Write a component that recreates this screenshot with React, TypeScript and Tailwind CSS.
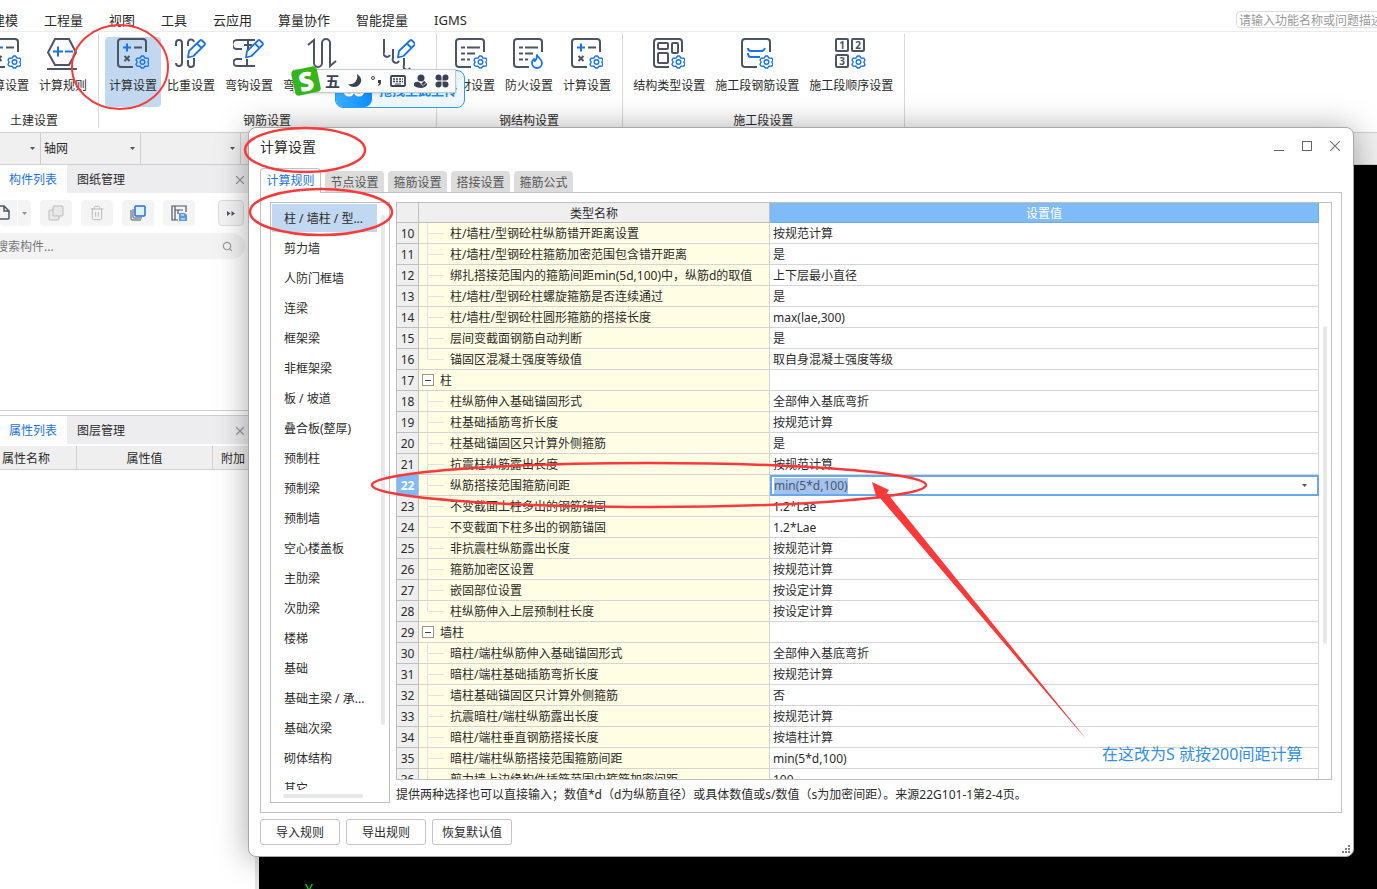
import type { ReactNode } from "react";
import { Check, Search, Trash2, X } from "lucide-react";
import clsx from "clsx";

const DARK = "#4d5466";
const BLUE = "#1a73e8";

const menus = ["建模", "工程量", "视图", "工具", "云应用", "算量协作", "智能提量", "IGMS"];

const categories = [
  "柱 / 墙柱 / 型...",
  "剪力墙",
  "人防门框墙",
  "连梁",
  "框架梁",
  "非框架梁",
  "板 / 坡道",
  "叠合板(整厚)",
  "预制柱",
  "预制梁",
  "预制墙",
  "空心楼盖板",
  "主肋梁",
  "次肋梁",
  "楼梯",
  "基础",
  "基础主梁 / 承...",
  "基础次梁",
  "砌体结构",
  "其它",
];

type Row = { id: number; name: string; value?: string; group?: boolean; last?: boolean };

const rows: Row[] = [
  { id: 10, name: "柱/墙柱/型钢砼柱纵筋错开距离设置", value: "按规范计算" },
  { id: 11, name: "柱/墙柱/型钢砼柱箍筋加密范围包含错开距离", value: "是" },
  { id: 12, name: "绑扎搭接范围内的箍筋间距min(5d,100)中，纵筋d的取值", value: "上下层最小直径" },
  { id: 13, name: "柱/墙柱/型钢砼柱螺旋箍筋是否连续通过", value: "是" },
  { id: 14, name: "柱/墙柱/型钢砼柱圆形箍筋的搭接长度", value: "max(lae,300)" },
  { id: 15, name: "层间变截面钢筋自动判断", value: "是" },
  { id: 16, name: "锚固区混凝土强度等级值", value: "取自身混凝土强度等级", last: true },
  { id: 17, name: "柱", group: true },
  { id: 18, name: "柱纵筋伸入基础锚固形式", value: "全部伸入基底弯折" },
  { id: 19, name: "柱基础插筋弯折长度", value: "按规范计算" },
  { id: 20, name: "柱基础锚固区只计算外侧箍筋", value: "是" },
  { id: 21, name: "抗震柱纵筋露出长度", value: "按规范计算" },
  { id: 22, name: "纵筋搭接范围箍筋间距", value: "min(5*d,100)" },
  { id: 23, name: "不变截面上柱多出的钢筋锚固", value: "1.2*Lae" },
  { id: 24, name: "不变截面下柱多出的钢筋锚固", value: "1.2*Lae" },
  { id: 25, name: "非抗震柱纵筋露出长度", value: "按规范计算" },
  { id: 26, name: "箍筋加密区设置", value: "按规范计算" },
  { id: 27, name: "嵌固部位设置", value: "按设定计算" },
  { id: 28, name: "柱纵筋伸入上层预制柱长度", value: "按设定计算", last: true },
  { id: 29, name: "墙柱", group: true },
  { id: 30, name: "暗柱/端柱纵筋伸入基础锚固形式", value: "全部伸入基底弯折" },
  { id: 31, name: "暗柱/端柱基础插筋弯折长度", value: "按规范计算" },
  { id: 32, name: "墙柱基础锚固区只计算外侧箍筋", value: "否" },
  { id: 33, name: "抗震暗柱/端柱纵筋露出长度", value: "按规范计算" },
  { id: 34, name: "暗柱/端柱垂直钢筋搭接长度", value: "按墙柱计算" },
  { id: 35, name: "暗柱/端柱纵筋搭接范围箍筋间距", value: "min(5*d,100)" },
  { id: 36, name: "剪力墙上边缘构件插筋范围内箍筋加密间距", value: "100" },
];

function Icon({ children }: { children: ReactNode }) {
  return (
    <svg width="32" height="32" fill="none" stroke={DARK} strokeWidth="2" className="shrink-0" aria-hidden="true">
      {children}
    </svg>
  );
}

function Gear({ x = 19, y = 17 }: { x?: number; y?: number }) {
  return (
    <g transform={`translate(${x} ${y})`} stroke={BLUE} strokeWidth="1.400" strokeLinejoin="round">
      <path d="M5.500 1h2l1.500 2 3 .3 1 1.700-1.200 2L13 9.500l-1 1.500-3 .2L7.500 13h-2L4 11.200 1 11 0 9.300 1.200 7 0 5l1-1.700L4 3Z" />
      <circle cx="6.500" cy="7" r="2.300" />
    </g>
  );
}

function Pencil({ x = 0 }: { x?: number }) {
  return (
    <g transform={`translate(${x} 0)`} stroke={BLUE} strokeWidth="1.800" strokeLinejoin="round">
      <path d="M14 13 25 2.500q1-1 2 0l2.500 2.500q1 1 0 2L18.500 18l-5.500 1.500ZM22 5.500l4.500 4.500" />
    </g>
  );
}

const frame = "M29 14V4a3 3 0 0 0-3-3H4a3 3 0 0 0-3 3v22a3 3 0 0 0 3 3h12";

function CalcIcon() {
  return (
    <Icon>
      <path d={frame} />
      <path d="M6 9.500h8M10 5.500v8" stroke={BLUE} />
      <path d="M17 9.500h8M7.500 18l5 5M12.500 18l-5 5" />
      <Gear />
    </Icon>
  );
}

function RuleIcon() {
  return (
    <Icon>
      <path d="M8 1h14l7 13.500L22 27H8L1 14.500ZM0 31h30" />
      <path d="M6 13.500h10M11 8.500v10M18 13.500h8" stroke={BLUE} />
    </Icon>
  );
}

function WeightIcon() {
  return (
    <Icon>
      <path d="M1 8V5a3 3 0 0 1 6 0v20a3 3 0 0 1-6 0M13 8V5a3 3 0 0 1 6-1M19 20v6a3 3 0 0 1-6 0v-4" />
      <Pencil />
    </Icon>
  );
}

function HookIcon() {
  return (
    <Icon>
      <path d="M22 2H4a3 3 0 0 0 0 9h5M15 2v11M11 7h8M22 28H4a3 3 0 0 1 0-7h5M14 28v-7" />
      <Pencil />
    </Icon>
  );
}

function BendIcon() {
  return (
    <Icon>
      <path d="M1 7l6-5v23a4 4 0 0 0 8 0V5a4 4 0 0 1 8 0v23l6-5" />
    </Icon>
  );
}

function StirrupIcon() {
  return (
    <Icon>
      <path d="M1 1v13a3 3 0 0 0 6 3M10 11v9a3 3 0 0 0 6 3M21 20v7a3 3 0 0 0 6 3" />
      <Pencil x={2} />
    </Icon>
  );
}

function ListIcon({ fire }: { fire?: boolean }) {
  return (
    <Icon>
      <path d={frame} />
      <path d="M6 9.500h4M12 9.500h13M6 15.500h4M12 15.500h8M6 21.500h4M12 21.500h3" />
      {fire ? (
        <path
          d="M24 17c1 3 5 4 5 8a5 5 0 0 1-10 0c0-2 1-3 2-4l1 2c2-2 2-4 2-6Z"
          stroke={BLUE}
          strokeWidth="1.800"
          strokeLinejoin="round"
        />
      ) : (
        <Gear />
      )}
    </Icon>
  );
}

function StructureIcon() {
  return (
    <Icon>
      <path d={frame} />
      <rect x="5" y="5" width="10" height="6" rx="1" />
      <rect x="5" y="15" width="10" height="10" rx="1" />
      <rect x="19" y="5" width="6" height="10" rx="1" />
      <Gear />
    </Icon>
  );
}

function SegmentIcon() {
  return (
    <Icon>
      <path d={frame} />
      <path d="M7 10q0 3 3 3h10q3 0 4-3M7 15q0 4 3 4h9" stroke={BLUE} />
      <Gear />
    </Icon>
  );
}

function OrderIcon() {
  const boxes = [
    [1, 1, "1"],
    [17, 1, "2"],
    [1, 17, "3"],
  ] as const;
  return (
    <Icon>
      {boxes.map(([x, y, n]) => (
        <g key={n}>
          <rect x={x} y={y} width="12" height="12" rx="1" />
          <text x={x + 6} y={y + 10} textAnchor="middle" fontSize="10" fontWeight="700" fill={DARK} stroke="none">
            {n}
          </text>
        </g>
      ))}
      <Gear x={17} />
    </Icon>
  );
}

function Tool({
  icon,
  label,
  active,
  className = "px-1 text-center",
}: {
  icon: ReactNode;
  label?: string;
  active?: boolean;
  className?: string;
}) {
  return (
    <button
      aria-label={label ?? "更多设置"}
      className={clsx(
        "flex h-[70px] shrink-0 flex-col items-center whitespace-nowrap rounded-sm pt-px",
        active && "bg-[#c1d8f0]",
        className,
      )}
    >
      {icon}
      <span className="mt-1.5 w-full leading-5">{label}</span>
    </button>
  );
}

function ToolGroup({ label, children, className }: { label: string; children: ReactNode; className?: string }) {
  return (
    <section
      className={clsx("flex h-[94px] shrink-0 flex-col border-r border-[#d9d9d9] pl-1.5 pr-[7px] pt-[3px]", className)}
    >
      <div className="flex gap-0.5">{children}</div>
      <div className="mt-1 text-center leading-5">{label}</div>
    </section>
  );
}

function Caret() {
  return (
    <svg width="5" height="3" viewBox="0 0 5 3" className="shrink-0" aria-hidden="true">
      <path d="M0 0h5L2.500 3Z" fill={DARK} />
    </svg>
  );
}

function Ribbon() {
  return (
    <div className="flex h-[101px] border-b border-[#cfcfcf] pt-0.5">
      <ToolGroup label="土建设置" className="-ml-[29px]">
        <Tool icon={<CalcIcon />} label="计算设置" />
        <Tool icon={<RuleIcon />} label="计算规则" />
      </ToolGroup>
      <ToolGroup label="钢筋设置">
        <Tool icon={<CalcIcon />} label="计算设置" active />
        <Tool icon={<WeightIcon />} label="比重设置" />
        <Tool icon={<HookIcon />} label="弯钩设置" />
        <Tool icon={<BendIcon />} label="弯" className="w-[88px] px-1 text-left" />
        <Tool icon={<StirrupIcon />} className="w-[60px]" />
      </ToolGroup>
      <ToolGroup label="钢结构设置">
        <Tool icon={<ListIcon />} label="钢材设置" />
        <Tool icon={<ListIcon fire />} label="防火设置" />
        <Tool icon={<CalcIcon />} label="计算设置" />
      </ToolGroup>
      <ToolGroup label="施工段设置">
        <Tool icon={<StructureIcon />} label="结构类型设置" />
        <Tool icon={<SegmentIcon />} label="施工段钢筋设置" />
        <Tool icon={<OrderIcon />} label="施工段顺序设置" />
      </ToolGroup>
    </div>
  );
}

function Picker({ label, text, className }: { label: string; text: string; className: string }) {
  return (
    <div className={clsx("relative flex items-center border-r border-[#cfcfcf]", className)}>
      <select aria-label={label} className="h-full w-full appearance-none bg-transparent pl-[3px] outline-none">
        <option>{text}</option>
      </select>
      <span className="pointer-events-none absolute right-[5px]">
        <Caret />
      </span>
    </div>
  );
}

function PanelTabs({ first, second }: { first: string; second: string }) {
  return (
    <div className="flex h-7 items-stretch bg-[#ededf0]">
      <button className="w-[67px] bg-white pl-[9px] pt-0.5 text-left text-[#1a73e8]">{first}</button>
      <button className="px-2.5 pt-0.5">{second}</button>
      <button aria-label="关闭" className="ml-auto mr-2 pt-px text-[#999]">
        <X size={14} strokeWidth={2} />
      </button>
    </div>
  );
}

const toolButton = "flex h-[26px] w-8 items-center justify-center rounded bg-[#f4f4f4]";

function SidePanel() {
  return (
    <aside className="flex w-[259px] shrink-0 flex-col border-r-4 border-[#e4e4e4] bg-white">
      <PanelTabs first="构件列表" second="图纸管理" />
      <div className="flex gap-[9px] pt-[7px]">
        <div className="flex h-[26px] w-[31px] overflow-hidden rounded bg-[#f4f4f4]">
          <button aria-label="新建" className="flex w-[18px] items-center border-r border-white">
            <svg width="10" height="16" viewBox="0 0 10 16" fill="none" stroke={DARK} strokeWidth="1.500">
              <path d="M0 1h4l5 5v7q0 1-1 1H0M4 1v5h5" />
            </svg>
          </button>
          <button aria-label="更多新建" className="flex flex-1 items-center justify-center opacity-60">
            <Caret />
          </button>
        </div>
        <button aria-label="复制" className={toolButton}>
          <svg width="16" height="16" fill="#e8e8e8" stroke="#bbb">
            <rect x="1" y="5" width="10" height="10" rx="1" />
            <rect x="5" y="1" width="10" height="10" rx="1" />
          </svg>
        </button>
        <button aria-label="删除" className={clsx(toolButton, "text-[#bbb]")}>
          <Trash2 size={16} strokeWidth={1.5} />
        </button>
        <button aria-label="层间复制" className={toolButton}>
          <svg width="16" height="16" fill="none" stroke={DARK}>
            <path d="M1 5v9q0 1 1 1h9M3 4v8q0 1 1 1h8" />
            <rect x="5" y="1" width="10" height="10" rx="1" fill="#e3f0ff" stroke={BLUE} strokeWidth="1.500" />
          </svg>
        </button>
        <button aria-label="存档" className={toolButton}>
          <svg width="16" height="16" fill="none" stroke={DARK} strokeWidth="1.200">
            <path d="M7 15H1V1h14v6M4 1v14M4 5h8M7 5v4" />
            <path d="M8 8h6l2 2v6H8Z" fill="#5b98e6" stroke="none" />
            <path d="M10 10h3M10 14h4" stroke="#fff" />
          </svg>
        </button>
        <button
          aria-label="展开"
          className="ml-3.5 flex h-[26px] w-[26px] items-center justify-center rounded border border-[#ddd] bg-[#f4f4f4]"
        >
          <svg width="8" height="5" viewBox="0 0 8 5" fill={DARK}>
            <path d="M0 0l3.500 2.500L0 5ZM4.500 0 8 2.500 4.500 5Z" />
          </svg>
        </button>
      </div>
      <div className="mr-2.5 mt-[7px] flex h-[26px] items-center rounded-r-full bg-[#f3f3f3] pr-3">
        <input
          aria-label="搜索构件"
          placeholder="搜索构件..."
          className="-ml-1 min-w-0 flex-1 bg-transparent pt-0.5 outline-none placeholder:text-[#777]"
        />
        <Search size={11} className="text-[#999]" strokeWidth={2.5} />
      </div>
      <div className="mt-[151px] h-[6px] border-y border-[#cfcfcf]" />
      <PanelTabs first="属性列表" second="图层管理" />
      <table className="mt-0.5 w-full table-fixed border-separate border-spacing-0 bg-[#efefef]">
        <colgroup>
          <col className="w-[77px]" />
          <col className="w-[136px]" />
          <col />
        </colgroup>
        <thead>
          <tr className="h-6 [&>th]:border-b [&>th]:border-[#d0d0d0] [&>th]:pt-0.5 [&>th]:font-normal">
            <th className="border-r pl-0.5 text-left">属性名称</th>
            <th className="border-r">属性值</th>
            <th className="pl-2 text-left">附加</th>
          </tr>
        </thead>
      </table>
    </aside>
  );
}

function NameCell({ row }: { row: Row }) {
  if (row.group) {
    return (
      <div className="flex items-center gap-1.5 pl-[3px]">
        <button
          aria-label={"折叠" + row.name}
          className="flex h-3 w-3 items-center justify-center border border-[#999] bg-white"
        >
          <span className="h-px w-1.5 bg-[#444]" />
        </button>
        <span className="pt-0.5">{row.name}</span>
      </div>
    );
  }
  return (
    <div className="flex h-5 items-center">
      <span className={clsx("ml-2 w-px bg-[#e2e2e2]", row.last ? "h-2.5 self-start" : "h-full")} />
      <span className="mr-1.5 h-px w-4 bg-[#e2e2e2]" />
      <span className="pt-0.5">{row.name}</span>
    </div>
  );
}

function SettingsTable() {
  return (
    <div className="relative h-[578px] overflow-hidden border border-[#bfbfbf] pr-3">
      <table className="w-full table-fixed border-separate border-spacing-0 leading-4">
        <colgroup>
          <col className="w-[22px]" />
          <col className="w-[351px]" />
          <col />
        </colgroup>
        <thead>
          <tr className="h-5 [&>th]:border-b [&>th]:border-r [&>th]:p-0 [&>th]:pt-0.5 [&>th]:font-normal">
            <th className="border-[#bfbfbf] bg-[#efefef]" />
            <th className="border-[#bfbfbf] bg-[#efefef]">类型名称</th>
            <th className="border-[#6fa9e8] bg-[#80bbf9] text-white">设置值</th>
          </tr>
        </thead>
        <tbody>
          {rows.map((row) => {
            const editing = row.id === 22;
            return (
              <tr key={row.id} className="h-[21px] [&>*]:border-b [&>*]:border-r [&>*]:p-0">
                <th
                  scope="row"
                  className={clsx(
                    "border-[#bfbfbf]",
                    editing ? "bg-[#80bbf9] font-bold text-white" : "bg-[#efefef] font-normal",
                  )}
                >
                  <div className="pt-0.5">{row.id}</div>
                </th>
                <td className="whitespace-nowrap border-[#d4d4d4] bg-[#fffde3]">
                  <NameCell row={row} />
                </td>
                {editing ? (
                  <td className="border-[#67a8e8]">
                    <div className="flex h-5 items-center justify-between border-2 border-r border-b border-[#67a8e8] pl-0.5 pr-2.5">
                      <input
                        aria-label={row.name}
                        defaultValue={row.value}
                        className="h-4 w-[74px] bg-[#a3c3ee] text-[#4b5668] outline-none"
                      />
                      <button aria-label="选择设置值">
                        <Caret />
                      </button>
                    </div>
                  </td>
                ) : (
                  <td className="border-[#d4d4d4]">
                    <div className="pl-[3px] pt-0.5">{row.value}</div>
                  </td>
                )}
              </tr>
            );
          })}
        </tbody>
      </table>
      <div className="absolute right-1 top-[123px] h-[318px] w-1 rounded-full bg-[#e8e8e8]" />
    </div>
  );
}

const dialogTabs = ["节点设置", "箍筋设置", "搭接设置", "箍筋公式"];

function SettingsDialog() {
  return (
    <div
      role="dialog"
      aria-label="计算设置"
      className="absolute left-[248px] right-[23px] top-[127px] rounded-lg border border-[#a8a8a8] bg-white px-[11px] pb-[11px] shadow-[0_2px_32px_rgba(0,0,0,0.35)]"
    >
      <header className="flex h-10 items-start justify-between pt-2">
        <h1 className="text-sm leading-[22px]">计算设置</h1>
        <div className="flex items-center gap-[18px] pr-0.5 pt-[5px]">
          <button aria-label="最小化" className="h-[9px] w-2.5 border-b border-[#666]" />
          <button aria-label="最大化" className="h-2.5 w-2.5 border border-[#666]" />
          <button aria-label="关闭">
            <svg width="10" height="10" stroke="#777" strokeWidth="1.200">
              <path d="M0 0l10 10M10 0 0 10" />
            </svg>
          </button>
        </div>
      </header>
      <div className="flex h-6 items-end gap-1">
        <button className="relative -mb-px h-[25px] w-[61px] rounded-t border border-b-0 border-[#bfc3c9] bg-white text-[#1a73e8]">
          计算规则
        </button>
        {dialogTabs.map((tab) => (
          <button key={tab} className="h-[21px] w-[59px] rounded-t bg-[#dcdcdc] pt-0.5 text-[#555]">
            {tab}
          </button>
        ))}
      </div>
      <div className="flex gap-1.5 border border-[#bfc3c9] p-[9px]">
        <div className="relative h-[601px] w-[120px] shrink-0 border border-[#bfbfbf] pl-px">
          <ul className="h-[587px] overflow-hidden">
            {categories.map((name, i) => (
              <li key={name} className="h-[30px] pt-px">
                <button
                  className={clsx(
                    "h-[28px] w-[105px] whitespace-nowrap pl-3 pt-0.5 text-left",
                    i === 0 && "bg-[#c1d8f0]",
                  )}
                >
                  {name}
                </button>
              </li>
            ))}
          </ul>
          <div className="absolute right-1 top-3 h-[510px] w-1 rounded-full bg-[#e8e8e8]" />
          <div className="absolute bottom-1 left-3 h-1 w-20 rounded-full bg-[#e8e8e8]" />
        </div>
        <div className="min-w-0 flex-1">
          <SettingsTable />
          <p className="pt-[7px] leading-4">
            提供两种选择也可以直接输入；数值*d（d为纵筋直径）或具体数值或s/数值（s为加密间距）。来源22G101-1第2-4页。
          </p>
        </div>
      </div>
      <footer className="mt-1.5 flex gap-1.5">
        {["导入规则", "导出规则", "恢复默认值"].map((label) => (
          <button key={label} className="h-[26px] w-20 rounded-[3px] border border-[#c4c4c4] pt-0.5">
            {label}
          </button>
        ))}
      </footer>
      <svg width="8" height="8" className="absolute bottom-[3px] right-[3px]" fill="#777d88" aria-hidden="true">
        <path d="M6 0h2v2H6ZM3 3h2v2H3ZM6 3h2v2H6ZM0 6h2v2H0ZM3 6h2v2H3ZM6 6h2v2H6Z" />
      </svg>
    </div>
  );
}

function UploadHint() {
  return (
    <div className="absolute left-[335px] top-[70px] flex h-[38px] w-[130px] overflow-hidden rounded-lg border border-[#2a9df4] bg-[#eef7ff]">
      <div className="flex w-9 shrink-0 justify-center rounded-br-lg bg-gradient-to-r from-[#38aefc] to-[#0a8bff]">
        <svg width="22" height="28" fill="none" stroke="#fff" strokeWidth="3" aria-hidden="true">
          <circle cx="6" cy="20" r="4" />
          <circle cx="16" cy="20" r="4" />
        </svg>
      </div>
      <span className="whitespace-nowrap pl-[7px] pt-[9px] text-[13px] font-bold leading-5 text-[#1a90f5]">
        拖拽至此上传
      </span>
    </div>
  );
}

function ImeBar() {
  return (
    <div className="absolute left-[293px] top-[69px] flex h-6 w-[163px] items-center border border-[#c3cad3] bg-[#fdfdfe] text-[#3c4256] shadow-sm">
      <div className="-ml-px flex h-[26px] w-[26px] shrink-0 -rotate-12 items-center justify-center rounded bg-[#34b51c] text-[26px] font-black leading-6 text-white">
        S
      </div>
      <span className="ml-1.5 text-[15px] font-bold leading-5">五</span>
      <svg width="14" height="14" className="ml-2 shrink-0" fill="#3c4256" aria-hidden="true">
        <path d="M9 0q5 3 4 8-2 5-7 5-4 0-6-3 5 1 8-3 2-3 1-7Z" />
      </svg>
      <svg width="14" height="14" className="ml-2 shrink-0" fill="none" stroke="#3c4256" aria-hidden="true">
        <circle cx="3" cy="4" r="1.500" />
        <path d="M8 6h3v3q0 2-3 3l1-3H8Z" fill="#3c4256" stroke="none" />
      </svg>
      <svg width="16" height="12" className="ml-1.5 shrink-0" fill="none" stroke="#3c4256" aria-hidden="true">
        <rect x="1" y="1" width="14" height="10" rx="1" strokeWidth="1.800" />
        <path d="M3 4h10M3 6.500h10" strokeDasharray="2 1" strokeWidth="1.500" />
        <path d="M5 9h6" />
      </svg>
      <span className="relative ml-2 flex shrink-0">
        <svg width="14" height="14" fill="#3c4256" aria-hidden="true">
          <circle cx="7" cy="4" r="3.500" />
          <path d="M0 9q3-2 5-1l2 2 3-3q3 1 3 4-2 3-6 3T0 12Z" />
        </svg>
        <Check size={8} className="absolute bottom-0 right-0 text-white" />
      </span>
      <svg width="14" height="14" className="ml-[7px] shrink-0" fill="#3c4256" aria-hidden="true">
        <path d="M6.500 6.500H3.500a3 3 0 1 1 3-3ZM7.500 6.500v-3a3 3 0 1 1 3 3ZM6.500 7.500v3a3 3 0 1 1-3-3ZM7.500 7.500h3a3 3 0 1 1-3 3Z" />
      </svg>
    </div>
  );
}

function Markup() {
  return (
    <>
      <svg
        width="1100"
        height="760"
        className="pointer-events-none absolute left-0 top-0"
        fill="none"
        stroke="#fa3a3a"
        strokeWidth="2.500"
        aria-hidden="true"
      >
        <ellipse cx="120" cy="67" rx="48" ry="42" strokeWidth="2" />
        <ellipse cx="305" cy="150" rx="60" ry="22" />
        <ellipse cx="321" cy="212" rx="71" ry="23" />
        <ellipse cx="649" cy="485" rx="277" ry="22" />
        <path d="M872 482 889 490 886 494 1086 739 881 498 877 499Z" fill="#fa3a3a" stroke="none" />
        <path d="M887 493 1087 740 880 498Z" fill="#fa3a3a" stroke="none" />
      </svg>
      <p className="absolute left-[1102px] top-[742px] whitespace-nowrap text-base leading-6 text-[#3390e0]">
        在这改为S 就按200间距计算
      </p>
    </>
  );
}

export default function App() {
  return (
    <div className="relative flex min-h-screen flex-col overflow-hidden bg-white font-['Noto_Sans','Noto_Sans_CJK_SC',sans-serif] text-xs text-[#2b2b2b]">
      <div className="flex h-8 items-center border-b border-[#ececec] pt-2">
        <nav className="-ml-2 flex gap-[26px] whitespace-nowrap pt-0.5 text-[13px]">
          {menus.map((name) => (
            <button key={name}>{name}</button>
          ))}
        </nav>
        <input
          aria-label="功能搜索"
          placeholder="请输入功能名称或问题描述"
          className="-mr-2 ml-auto h-[17px] w-[149px] rounded-sm border border-[#ddd] pl-0.5 pt-px outline-none placeholder:text-[#999]"
        />
      </div>
      <Ribbon />
      <div className="flex h-8 border-b border-[#cfcfcf] bg-[#f0f0f0]">
        <Picker label="楼层" text="" className="w-[41px]" />
        <Picker label="构件类别" text="轴网" className="w-[100px]" />
        <Picker label="构件" text="" className="w-[100px]" />
      </div>
      <div className="flex flex-1">
        <SidePanel />
        <main className="relative flex-1 overflow-hidden bg-black">
          <span className="absolute -bottom-2 left-[46px] text-sm leading-4 text-[#00e000]">Y</span>
        </main>
      </div>
      <SettingsDialog />
      <UploadHint />
      <ImeBar />
      <Markup />
    </div>
  );
}
